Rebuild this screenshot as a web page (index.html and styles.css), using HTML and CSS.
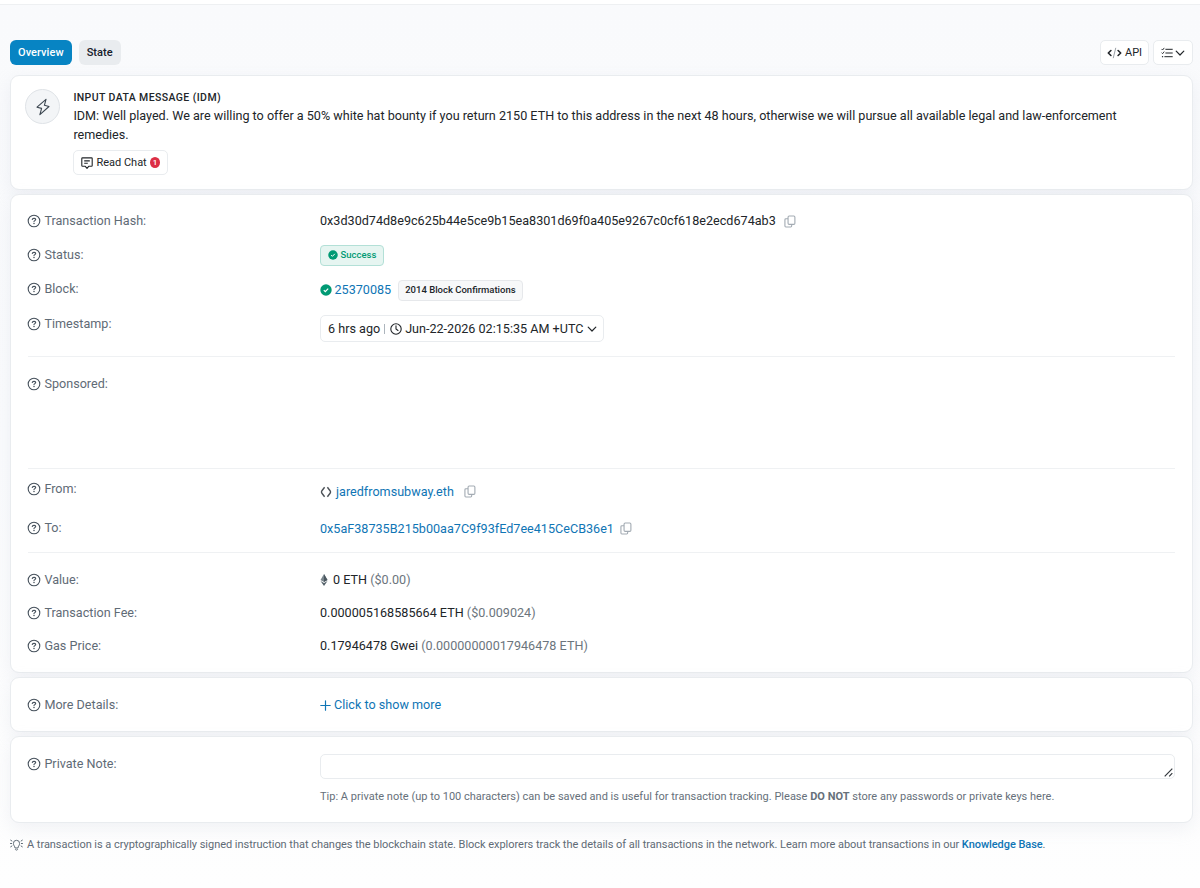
FILE: index.html
```html
<!DOCTYPE HTML>
<html lang="en">
<head>
	<meta charset="utf-8">
	<title>Transaction Details</title>
	<link rel="stylesheet" href="styles.css">
</head>
<body>
	<!-- Icons -->
	<svg class="sprite" width="0" height="0">
		<symbol id="help" viewBox="0 0 14 14"><g fill="none" stroke="currentColor" stroke-linecap="round"><circle cx="7" cy="7" r="5.8" stroke-width="1.1"/><path stroke-width="1.15" d="M5.3 5.5c.1-.8.7-1.2 1.5-1.2h.5c.8 0 1.4.5 1.4 1.2 0 1-1.7 1.2-1.7 2.1"/></g><circle cx="7" cy="9.5" r=".75" fill="currentColor"/></symbol>
		<symbol id="copy" viewBox="0 0 13 14"><g fill="none" stroke="currentColor" stroke-width="1.2" stroke-linejoin="round"><rect x="4.4" y="1.1" width="7.4" height="9" rx="1.2"/><path d="M4.4 4H2c-.6 0-1 .4-1 1v7c0 .6.4 1 1 1h5.3c.6 0 1-.4 1-1v-1.9"/></g></symbol>
		<symbol id="check" viewBox="0 0 12 12"><circle cx="6" cy="6" r="5.7" fill="currentColor"/><path d="M3.8 6.1l1.5 1.5 2.9-3" fill="none" stroke="#fff" stroke-width="1.2"/></symbol>
		<symbol id="down" viewBox="0 0 10 10"><path d="M1.2 3.200L5 7l3.800-3.800" fill="none" stroke="currentColor" stroke-width="1.2" stroke-linecap="round" stroke-linejoin="round"/></symbol>
	</svg>

	<div class="topbar"></div>
	<main class="page">
		<div class="toolbar">
			<a class="tab tab-on">Overview</a>
			<a class="tab">State</a>
			<div class="tools">
				<button class="button tool-api"><svg width="15" height="12" viewBox="0 0 15 12" fill="none" stroke-linecap="round" stroke-linejoin="round"><path d="M3.9 3.5L1.3 6l2.6 2.5M11.1 3.5L13.7 6l-2.6 2.500" stroke="#212529" stroke-width="1.6"/><path d="M8.7 1.200L6.300 10.800" stroke="#9aa0a6"/></svg>API</button>
				<button class="button tool-list"><svg width="12" height="12" viewBox="0 0 12 12" fill="none" stroke="currentColor" stroke-linecap="round" stroke-linejoin="round"><path d="M4.8 2.300h6.500M4.800 6h6.500M3.800 9.700h7.500"/><path stroke-width=".9" d="M.8 2.200l.8.8 1.400-1.800M.8 5.900l.8.8L3 4.900"/><path stroke-width="1.3" d="M1.500 9.700h.1"/></svg><svg class="down"><use href="#down"/></svg></button>
			</div>
		</div>

		<!-- Message -->
		<section class="card message">
			<div class="bolt"><svg width="16" height="18" viewBox="0 0 16 18" fill="none" stroke="currentColor" stroke-width="1.1" stroke-linejoin="round"><path d="M11 1.300L2 9.200l4.600 1.200-1.700 6.200L14 8.500 9.400 7.300z"/></svg></div>
			<div class="message-body">
				<h2>INPUT DATA MESSAGE (IDM)</h2>
				<p>IDM: Well played. We are willing to offer a 50% white hat bounty if you return 2150 ETH to this address in the next 48 hours, otherwise we will pursue all available legal and law-enforcement remedies.</p>
				<button class="button chat"><svg width="12" height="12" viewBox="0 0 12 12" fill="none" stroke="currentColor" stroke-width="1.1" stroke-linejoin="round"><path d="M1.500.9h9c.4 0 .7.300.7.700v7c0 .4-.3.700-.7.700H7.700L6 11.300 4.300 9.300H1.500c-.4 0-.7-.3-.7-.7v-7c0-.4.3-.7.7-.7z"/><path d="M3.200 3.900h5.600M3.200 6.300h3.600"/></svg>Read Chat <span class="count">1</span></button>
			</div>
		</section>

		<!-- Transaction -->
		<section class="card details">
			<div class="row row-hash">
				<div class="label"><svg class="help"><use href="#help"/></svg>Transaction Hash:</div>
				<div class="value"><span class="hash">0x3d30d74d8e9c625b44e5ce9b15ea8301d69f0a405e9267c0cf618e2ecd674ab3</span><svg class="copy"><use href="#copy"/></svg></div>
			</div>
			<div class="row row-status">
				<div class="label"><svg class="help"><use href="#help"/></svg>Status:</div>
				<div class="value"><span class="badge badge-success"><svg class="check"><use href="#check"/></svg>Success</span></div>
			</div>
			<div class="row row-block">
				<div class="label"><svg class="help"><use href="#help"/></svg>Block:</div>
				<div class="value"><svg class="check"><use href="#check"/></svg><a class="block">25370085</a><span class="badge">2014 Block Confirmations</span></div>
			</div>
			<div class="row row-time">
				<div class="label"><svg class="help"><use href="#help"/></svg>Timestamp:</div>
				<div class="value"><button class="button time"><span>6 hrs ago</span><i></i><svg width="12" height="12" viewBox="0 0 12 12" fill="none" stroke="currentColor" stroke-width="1.1" stroke-linecap="round"><circle cx="6" cy="6" r="5.2"/><path d="M6 2.800V6l2 1.500"/></svg><span class="date">Jun-22-2026 02:15:35 AM +UTC</span><svg class="down"><use href="#down"/></svg></button></div>
			</div>
			<hr>
			<div class="row row-sponsored">
				<div class="label"><svg class="help"><use href="#help"/></svg>Sponsored:</div>
			</div>
			<hr>
			<div class="row row-from">
				<div class="label"><svg class="help"><use href="#help"/></svg>From:</div>
				<div class="value"><svg class="ens" width="12" height="12" viewBox="0 0 12 12" fill="none" stroke="#4b5157" stroke-width="1.4" stroke-linejoin="round"><path d="M4.600 1.200L1.900 4.700c-.5.700-.5 1.900 0 2.600l2.700 3.500M7.400 1.200l2.700 3.500c.5.700.5 1.900 0 2.600l-2.700 3.500"/></svg><a class="name">jaredfromsubway.eth</a><svg class="copy"><use href="#copy"/></svg></div>
			</div>
			<div class="row row-to">
				<div class="label"><svg class="help"><use href="#help"/></svg>To:</div>
				<div class="value"><a class="address">0x5aF38735B215b00aa7C9f93fEd7ee415CeCB36e1</a><svg class="copy"><use href="#copy"/></svg></div>
			</div>
			<hr>
			<div class="row row-value">
				<div class="label"><svg class="help"><use href="#help"/></svg>Value:</div>
				<div class="value"><svg class="eth" width="8" height="12" viewBox="0 0 8 12"><path d="M4 0L.5 6 4 8.100 7.500 6z" fill="#7a868d"/><path d="M4 0v8.100L7.500 6z" fill="#4c5860"/><path d="M.5 6.900L4 9l3.500-2.100L4 11.900z" fill="#56636b"/></svg><span>0 ETH <em>($0.00)</em></span></div>
			</div>
			<div class="row row-fee">
				<div class="label"><svg class="help"><use href="#help"/></svg>Transaction Fee:</div>
				<div class="value"><span>0.000005168585664 ETH <em>($0.009024)</em></span></div>
			</div>
			<div class="row row-gas">
				<div class="label"><svg class="help"><use href="#help"/></svg>Gas Price:</div>
				<div class="value"><span>0.17946478 Gwei <em>(0.00000000017946478 ETH)</em></span></div>
			</div>
		</section>

		<section class="card more">
			<div class="row">
				<div class="label"><svg class="help"><use href="#help"/></svg>More Details:</div>
				<div class="value"><a><svg class="plus" width="11" height="11" viewBox="0 0 11 11" fill="none" stroke="currentColor" stroke-width="1.2" stroke-linecap="round"><path d="M5.500.8v9.400M.8 5.500h9.400"/></svg>Click to show more</a></div>
			</div>
		</section>

		<section class="card note">
			<div class="row">
				<div class="label"><svg class="help"><use href="#help"/></svg>Private Note:</div>
				<div class="note-body">
					<div class="field"><svg width="9" height="9" viewBox="0 0 9 9" fill="none" stroke="#33383d" stroke-width="1.2"><path d="M.7 8.300L8.300.7M5.200 8.300l3.100-3.100"/></svg></div>
					<p class="tip">Tip: A private note (up to 100 characters) can be saved and is useful for transaction tracking. Please <b>DO NOT</b> store any passwords or private keys here.</p>
				</div>
			</div>
		</section>

		<p class="about"><svg width="13" height="12" viewBox="0 0 13 12" fill="none" stroke="currentColor" stroke-linecap="round"><path d="M5 8.600C5 7.200 3.400 6.600 3.400 4.400a3.100 3.100 0 016.200 0C9.600 6.600 8 7.200 8 8.600zM5.300 10.500c.5.900 1.900.9 2.400 0M.5 4.500h1.100M11.400 4.500h1.100M.7 1.200l1.200.8M12.300 1.200l-1.200.8M.7 7.800L1.900 7M12.300 7.800L11.100 7"/></svg><span>A transaction is a cryptographically signed instruction that changes the blockchain state. Block explorers track the details of all transactions in the network. Learn more about transactions in our <a>Knowledge Base</a>.</span></p>
	</main>
</body>
</html>
```
FILE: styles.css
```css
* {
	box-sizing:border-box;
	}
body {
	margin:0;
	min-height:888px;
	background:linear-gradient(#f9fafc 0,#fafbfd 50%,#fefefe 100%);
	color:#212529;
	font:12.6px/20px Roboto, sans-serif;
	letter-spacing:.01px;
	}
h2, p {
	margin:0;
	}
svg {
	display:block;
	flex:none;
	}
a {
	color:#0f75b5;
	}
em {
	color:#6c757d;
	font-style:normal;
	}
hr {
	height:1px;
	margin:0;
	border:0;
	background:#eff1f3;
	}
.sprite {
	position:absolute;
	}
.topbar {
	height:5px;
	border-bottom:1px solid #eef0f2;
	background:#fff;
	}
.page {
	padding:35px 7px 0 10px;
	}

/* Toolbar */
.toolbar {
	display:flex;
	height:35px;
	align-items:flex-start;
	gap:7px;
	}
.tab {
	height:25px;
	padding:0 8px;
	border-radius:6px;
	background:#e9ecef;
	color:#16202c;
	font-size:11px;
	font-weight:500;
	line-height:25px;
	letter-spacing:.06px;
	}
.tab-on {
	background:#0784c3;
	color:#fff;
	}
.tools {
	display:flex;
	gap:4px;
	margin-left:auto;
	}
.button {
	display:flex;
	align-items:center;
	height:25px;
	padding:0 7px;
	border:1px solid #e9ecef;
	border-radius:5px;
	background:#fff;
	color:#212529;
	font:11px Roboto, sans-serif;
	letter-spacing:0;
	white-space:nowrap;
	}
.tool-api {
	gap:3px;
	width:49px;
	padding:0 6px;
	}
.tool-list {
	gap:2px;
	width:40px;
	}
.down {
	width:10px;
	height:10px;
	}

/* Cards */
.card {
	margin-bottom:4px;
	padding:0 17px;
	border:1px solid #e9ecef;
	border-radius:9px;
	background:#fff;
	box-shadow:0 6px 18px rgba(189,197,209,.2);
	}
.message {
	display:flex;
	height:115px;
	padding:13px 60px 0 14px;
	}
.bolt {
	display:flex;
	align-items:center;
	justify-content:center;
	width:35px;
	height:35px;
	border:1px solid #dfe3e7;
	border-radius:50%;
	background:#f3f5f7;
	color:#3b4650;
	}
.message-body {
	flex:1;
	margin-left:13.4px;
	}
	.message-body h2 {
		font-size:10.5px;
		font-weight:500;
		line-height:17px;
		letter-spacing:.4px;
		}
	.message-body p {
		margin-top:1px;
		line-height:18.5px;
		letter-spacing:0;
		}
.chat {
	gap:3px;
	width:95px;
	margin-top:6px;
	}
.count {
	width:11px;
	height:11px;
	border-radius:50%;
	background:#dc2f45;
	color:#fff;
	font-size:8px;
	font-weight:500;
	line-height:11px;
	text-align:center;
	}

/* Rows */
.row {
	display:flex;
	align-items:flex-start;
	height:34px;
	}
.label {
	display:flex;
	align-items:center;
	width:292px;
	height:34px;
	color:#5f6b76;
	}
.help {
	width:14px;
	height:14px;
	margin:-1px 3px 0 -.6px;
	color:#46515c;
	}
.value {
	display:flex;
	align-items:center;
	height:34px;
	}
	.value > a {
		display:flex;
		align-items:center;
		}
.copy {
	width:12px;
	height:13px;
	margin-left:8.5px;
	color:#a3abb3;
	}
.check {
	width:12px;
	height:12px;
	color:#009a74;
	}
.details {
	height:479px;
	padding-top:9px;
	}
.row-block {
	height:35px;
	}
	.row-block .value {
		height:36px;
		}
	.row-block .check {
		margin:0 3px 0 -.5px;
		}
	.row-block .badge {
		margin-left:6.5px;
		}
.row-time {
	height:49px;
	}
	.row-time .value {
		height:43px;
		}
.row-sponsored {
	height:111px;
	padding-top:10px;
	}
.row-from {
	height:42px;
	padding-top:3px;
	}
	.row-from .value {
		height:39px;
		}
	.row-from .copy {
		margin-left:10px;
		}
.row-to {
	height:41px;
	}
	.row-to .value {
		height:35px;
		}
	.row-to .copy {
		margin-left:6.5px;
		}
.row-value {
	height:43px;
	padding-top:10px;
	}
.row-fee {
	height:33px;
	}
.badge {
	display:flex;
	align-items:center;
	height:21px;
	padding:0 6.5px;
	border:1px solid #e6e8eb;
	border-radius:4px;
	background:#f7f8f9;
	font-size:9.5px;
	font-weight:500;
	letter-spacing:0;
	}
.badge-success {
	border-color:#b3e0d7;
	background:#e6f5f1;
	color:#009a74;
	}
	.badge-success .check {
		width:10px;
		height:10px;
		margin-right:3px;
		}
.time {
	width:284px;
	height:27px;
	font-size:12.6px;
	}
	.time i {
		flex:none;
		width:1px;
		height:10px;
		margin:0 5px 0 4px;
		background:#adb5bd;
		}
	.time .date {
		margin:0 4px 0 3px;
		}
.ens {
	margin-right:4px;
	}
.eth {
	margin-right:5px;
	}
.plus {
	margin-right:3px;
	}
.more {
	height:55px;
	padding-top:10px;
	}
.note {
	height:87px;
	padding-top:10px;
	}
.note-body {
	flex:1;
	padding-top:7px;
	}
.field {
	display:flex;
	align-items:flex-end;
	justify-content:flex-end;
	height:25px;
	padding:1px;
	border:1px solid #e9ecef;
	border-radius:5px;
	}
.tip {
	margin-top:8px;
	color:#66707a;
	font-size:11px;
	letter-spacing:.01px;
	}
	.tip b {
		font-weight:700;
		}
.about {
	display:flex;
	align-items:center;
	gap:4px;
	margin-top:12px;
	color:#5f6b76;
	font-size:11px;
	letter-spacing:-.034px;
	}
	.about a {
		font-weight:500;
		letter-spacing:-.06px;
		}
```
